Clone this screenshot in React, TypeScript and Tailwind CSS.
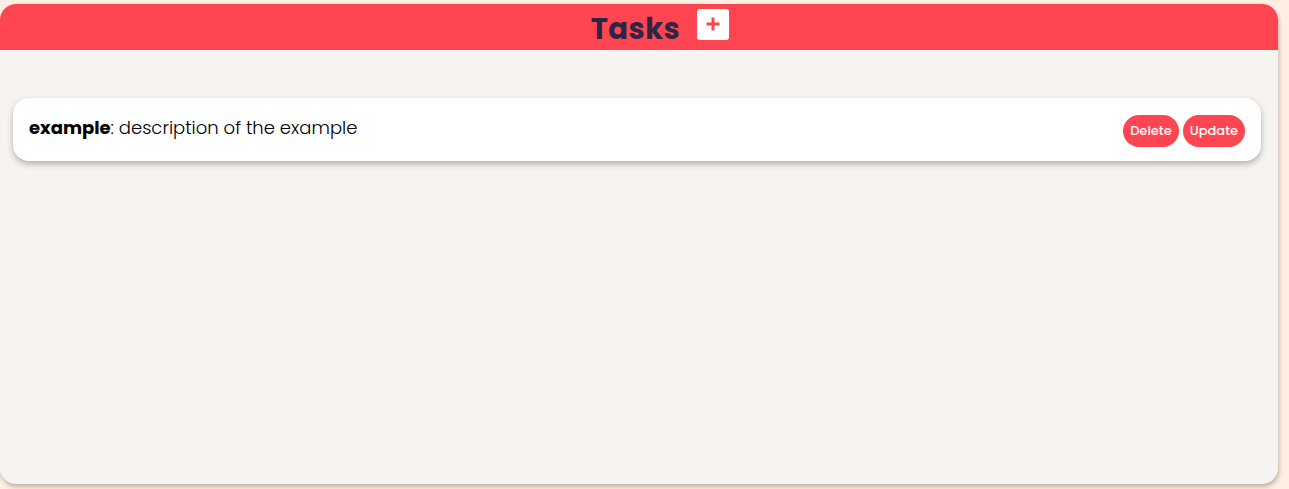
import React from "react";

const FONT = { fontFamily: "Poppins, 'Noto Sans', Lato, sans-serif" };

type Task = { title: string; description: string };

const TASKS: Task[] = [{ title: "example", description: "description of the example" }];

const PlusIcon: React.FC = () => (
	<svg viewBox="0 0 16 16" width="16" height="16" aria-hidden>
		<path d="M8 1.5v13M1.5 8h13" stroke="#ff4552" strokeWidth="3" strokeLinecap="butt" />
	</svg>
);

const TaskCard: React.FC<{ task: Task }> = ({ task }) => (
	<div className="flex items-center justify-between bg-white rounded-2xl h-[63px] pl-4 pr-4 shadow-[0_3px_6px_rgba(0,0,0,0.28)]">
		<p className="text-[18px] text-black font-light pb-[4px]">
			<span className="font-bold">{task.title}</span>: {task.description}
		</p>
		<div className="flex items-center gap-1 pt-[2px]">
			<button className="h-[32px] px-[7px] rounded-full bg-[#ff4552] text-white text-[13px] font-medium">
				Delete
			</button>
			<button className="h-[32px] px-[7px] rounded-full bg-[#ff4552] text-white text-[13px] font-medium">
				Update
			</button>
		</div>
	</div>
);

export default function App() {
	return (
		<div className="w-full h-[489px] bg-[#fdefe2] pt-1" style={FONT}>
			<div className="w-[1278px] h-[480px] rounded-2xl overflow-hidden bg-[#f7f3f0] shadow-[1px_3px_4px_rgba(90,70,50,0.35)] flex flex-col">
				{/* Header */}
				<div className="h-[46px] bg-[#ff4552] grid grid-cols-[1fr_auto_1fr] items-center">
					<div />
					<h1 className="text-[29px] font-bold text-[#2b2646] leading-none pt-[4px] tracking-[0.5px] -ml-[7px]">
						Tasks
					</h1>
					<div className="flex justify-start pl-[17px]">
						<button className="w-[32px] h-[31px] bg-white rounded-[3px] flex items-center justify-center -mt-[6px]">
							<PlusIcon />
						</button>
					</div>
				</div>

				{/* List */}
				<div className="flex flex-col gap-3 px-[13px] pt-[48px] pr-[17px]">
					{TASKS.map((t) => (
						<TaskCard key={t.title} task={t} />
					))}
				</div>
			</div>
		</div>
	);
}
